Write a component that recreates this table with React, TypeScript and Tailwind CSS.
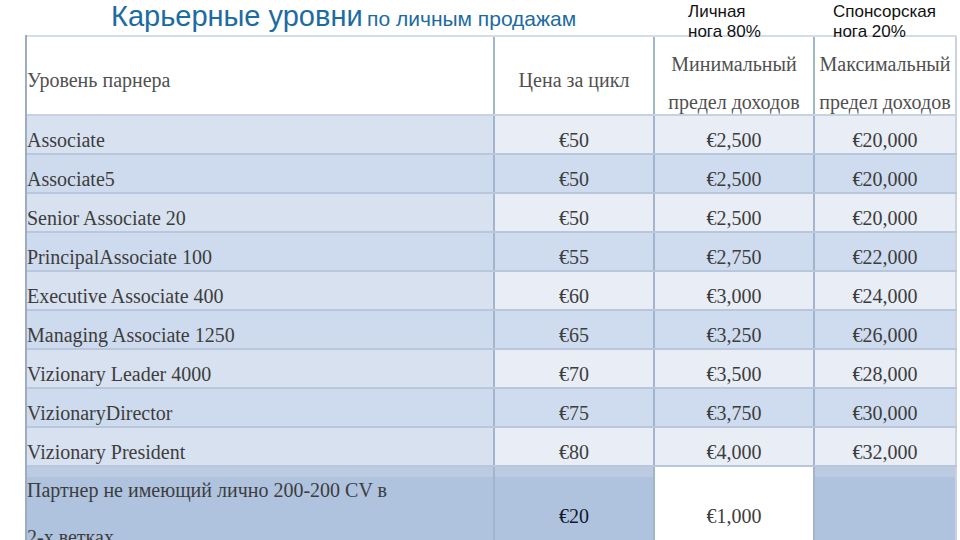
const rows = [
  ["Associate", "€50", "€2,500", "€20,000"],
  ["Associate5", "€50", "€2,500", "€20,000"],
  ["Senior Associate 20", "€50", "€2,500", "€20,000"],
  ["PrincipalAssociate 100", "€55", "€2,750", "€22,000"],
  ["Executive Associate 400", "€60", "€3,000", "€24,000"],
  ["Managing Associate 1250", "€65", "€3,250", "€26,000"],
  ["Vizionary Leader 4000", "€70", "€3,500", "€28,000"],
  ["VizionaryDirector", "€75", "€3,750", "€30,000"],
  ["Vizionary President", "€80", "€4,000", "€32,000"],
];

const serif = "font-['Liberation_Serif','Times_New_Roman',serif]";
const sans = "font-['Liberation_Sans',Arial,sans-serif]";
const band = "bg-[linear-gradient(to_bottom,#bccbe2_0px,#bccbe2_10px,#afc3df_10px)]";

const App = () => {
  return (
    <div className={`w-[960px] h-[540px] overflow-hidden bg-white ${serif}`}>
      {/* title + leg labels */}
      <div className="flex h-[35px] relative z-10">
        <div className={`ml-[111px] w-[577px] leading-[32px] text-[#1c6ba1] whitespace-nowrap ${sans}`}>
          <span className="text-[29px]">Карьерные уровни</span>{" "}
          <span className="text-[21px]">по личным продажам</span>
        </div>
        <div className={`w-[145px] pt-[2px] text-[17px] leading-[20px] text-[#111] ${sans}`}>
          Личная
          <br />
          нога 80%
        </div>
        <div className={`pt-[2px] text-[17px] leading-[20px] text-[#111] ${sans}`}>
          Спонсорская
          <br />
          нога 20%
        </div>
      </div>

      <div className="ml-[25px] w-[932px] border-l-2 border-[#9eacc1] text-[20px] text-[#3d3d3d]">
        {/* header */}
        <div className="flex h-[81px] bg-white border-t-2 border-b-2 border-t-[#d3dce8] border-b-[#c5d2e2] text-[#505050]">
          <div className="w-[468px] border-r-2 border-[#a3b4cd] pt-[31px] leading-[25px] whitespace-nowrap">
            Уровень парнера
          </div>
          <div className="w-[160px] border-r-2 border-[#a3b4cd] pt-[31px] leading-[25px] text-center">
            Цена за цикл
          </div>
          <div className="w-[160px] border-r-2 border-[#a3b4cd] pt-[8px] leading-[38px] text-center whitespace-nowrap">
            Минимальный
            <br />
            предел доходов
          </div>
          <div className="w-[142px] border-r-2 border-[#c9d3e0] pt-[8px] leading-[38px] text-center whitespace-nowrap">
            Максимальный
            <br />
            предел доходов
          </div>
        </div>

        {/* body */}
        {rows.map((r, i) => {
          const odd = i % 2 === 0;
          const first = odd ? "bg-[#d8e1ef]" : "bg-[#cedbee]";
          const rest = odd ? "bg-[#e8edf6]" : "bg-[#cfdcef]";
          return (
            <div key={r[0]} className="flex h-[39px] border-b-2 border-[#b8c7dc]">
              <div className={`w-[468px] border-r-2 border-[#a3b4cd] pt-[12px] leading-[25px] whitespace-nowrap ${first}`}>
                {r[0]}
              </div>
              <div className={`w-[160px] border-r-2 border-[#a3b4cd] pt-[12px] leading-[25px] text-center ${rest}`}>
                {r[1]}
              </div>
              <div className={`w-[160px] border-r-2 border-[#a3b4cd] pt-[12px] leading-[25px] text-center ${rest}`}>
                {r[2]}
              </div>
              <div className={`w-[142px] border-r-2 border-[#c9d3e0] pt-[12px] leading-[25px] text-center ${rest}`}>
                {r[3]}
              </div>
            </div>
          );
        })}

        {/* last row */}
        <div className="flex h-[102px]">
          <div className={`w-[468px] border-r-2 border-[#a3b4cd] leading-[47px] whitespace-nowrap ${band}`}>
            Партнер не имеющий лично 200-200 CV в
            <br />
            2-х ветках
          </div>
          <div className={`w-[160px] border-r-2 border-[#a3b4cd] pt-[37px] leading-[25px] text-center text-[#14182a] ${band}`}>
            €20
          </div>
          <div className="w-[160px] border-r-2 border-[#a3b4cd] bg-white pt-[37px] leading-[25px] text-center">
            €1,000
          </div>
          <div className={`w-[142px] border-r-2 border-[#c9d3e0] ${band}`} />
        </div>
      </div>
    </div>
  );
};

export default App;
